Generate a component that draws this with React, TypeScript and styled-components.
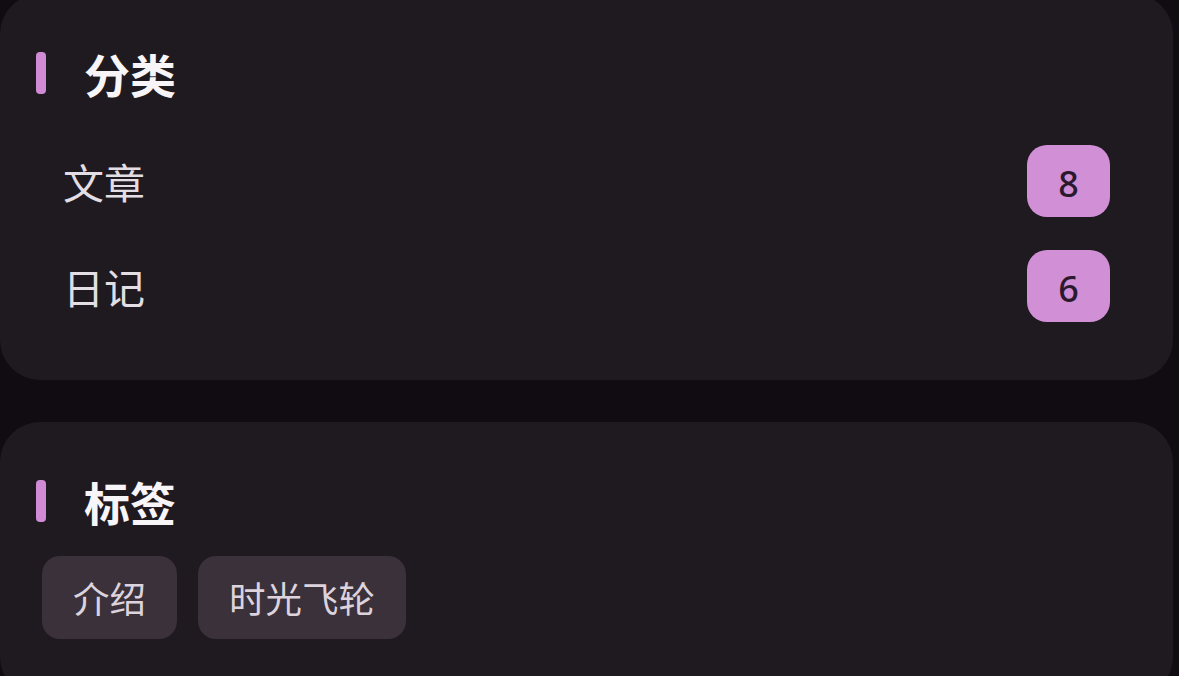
import styled, { createGlobalStyle } from 'styled-components';

const GlobalStyle = createGlobalStyle`
  html, body {
    margin: 0;
    padding: 0;
    background: #110c12;
    overflow: hidden;
  }
  body {
    font-family: "Noto Sans CJK SC", "Noto Sans", sans-serif;
  }
`;

const Page = styled.div`
  display: flex;
  flex-direction: column;
  gap: 42px;
  width: 1173px;
  margin-top: -6px;
`;

const Card = styled.section`
  display: flex;
  flex-direction: column;
  background: #1f1a20;
  border-radius: 40px;
  padding: 54px 0 58px;
`;

const Header = styled.div`
  display: flex;
  align-items: center;
  gap: 38px;
  height: 50px;
  padding-left: 36px;
`;

const Accent = styled.span`
  width: 10px;
  height: 42px;
  border-radius: 4px;
  background: #d08bd4;
`;

const Title = styled.h2`
  margin: 0;
  font-size: 46px;
  font-weight: 700;
  line-height: 1;
  color: #f7f5f7;
`;

const List = styled.ul`
  display: flex;
  flex-direction: column;
  gap: 33px;
  margin: 47px 0 0;
  padding: 0 63px;
  list-style: none;
`;

const Row = styled.li`
  display: flex;
  align-items: center;
  justify-content: space-between;
  height: 72px;
`;

const RowLabel = styled.span`
  font-size: 41px;
  color: #e2dee3;
  line-height: 1;
`;

const Count = styled.span`
  display: flex;
  align-items: center;
  justify-content: center;
  box-sizing: border-box;
  width: 83px;
  height: 72px;
  padding-top: 6px;
  border-radius: 20px;
  background: #d18fd6;
  color: #2b1a2e;
  font-family: "Noto Sans", sans-serif;
  font-size: 36px;
  font-weight: 500;
  line-height: 1;
`;

const Tags = styled.div`
  display: flex;
  gap: 21px;
  margin-top: 30px;
  padding-left: 42px;
`;

const Tag = styled.span`
  display: flex;
  align-items: center;
  height: 83px;
  padding: 0 31px;
  border-radius: 18px;
  background: #3a313a;
  color: #dcd3dd;
  font-size: 36.5px;
`;

const categories = [
  { name: '文章', count: 8 },
  { name: '日记', count: 6 },
];

const tags = ['介绍', '时光飞轮'];

export default function App() {
  return (
    <>
      <GlobalStyle />
      <Page>
        <Card>
          <Header>
            <Accent />
            <Title>分类</Title>
          </Header>
          <List>
            {categories.map((c) => (
              <Row key={c.name}>
                <RowLabel>{c.name}</RowLabel>
                <Count>{c.count}</Count>
              </Row>
            ))}
          </List>
        </Card>
        <Card>
          <Header>
            <Accent />
            <Title>标签</Title>
          </Header>
          <Tags>
            {tags.map((t) => (
              <Tag key={t}>{t}</Tag>
            ))}
          </Tags>
        </Card>
      </Page>
    </>
  );
}
